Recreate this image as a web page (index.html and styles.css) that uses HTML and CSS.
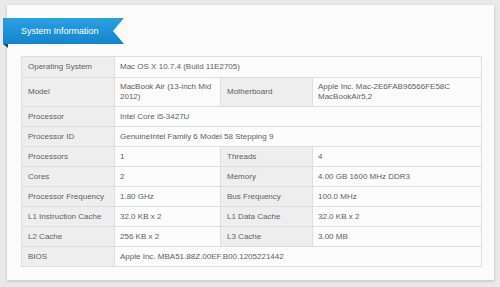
FILE: index.html
```html
<!DOCTYPE html>
<html>
<head>
<meta charset="utf-8">
<link rel="stylesheet" href="styles.css">
</head>
<body>
<div class="card">
  <div class="ribbon-wrap">
    <div class="ribbon">System Information</div>
    <div class="fold"></div>
  </div>
  <table class="info">
    <colgroup>
      <col class="c1"><col class="c2"><col class="c3"><col class="c4">
    </colgroup>
    <tr class="r-first"><th>Operating System</th><td colspan="3">Mac OS X 10.7.4 (Build 11E2705)</td></tr>
    <tr class="r-tall"><th>Model</th><td>MacBook Air (13-inch Mid 2012)</td><th>Motherboard</th><td>Apple Inc. Mac-2E6FAB96566FE58C MacBookAir5,2</td></tr>
    <tr><th>Processor</th><td colspan="3">Intel Core i5-3427U</td></tr>
    <tr><th>Processor ID</th><td colspan="3">GenuineIntel Family 6 Model 58 Stepping 9</td></tr>
    <tr><th>Processors</th><td>1</td><th>Threads</th><td>4</td></tr>
    <tr><th>Cores</th><td>2</td><th>Memory</th><td>4.00 GB 1600 MHz DDR3</td></tr>
    <tr><th>Processor Frequency</th><td>1.80 GHz</td><th>Bus Frequency</th><td>100.0 MHz</td></tr>
    <tr><th>L1 Instruction Cache</th><td>32.0 KB x 2</td><th>L1 Data Cache</th><td>32.0 KB x 2</td></tr>
    <tr><th>L2 Cache</th><td>256 KB x 2</td><th>L3 Cache</th><td>3.00 MB</td></tr>
    <tr><th>BIOS</th><td colspan="3">Apple Inc. MBA51.88Z.00EF.B00.1205221442</td></tr>
  </table>
</div>
</body>
</html>
```
FILE: styles.css
```css
html, body {
  margin: 0;
  padding: 0;
}
body {
  background: #e9e9e9;
  width: 500px;
  height: 287px;
  overflow: hidden;
  font-family: "Liberation Sans", Arial, sans-serif;
}
.card {
  margin: 5px 6px 0 7px;
  height: 275px;
  box-sizing: border-box;
  background: #fbfbfb;
  box-shadow: 0 1px 3px rgba(0,0,0,0.18);
  padding: 13px 13px 13px 14px;
}
.ribbon-wrap {
  margin-left: -18px;
  width: 121px;
  height: 30px;
  display: flex;
  flex-direction: column;
}
.ribbon {
  height: 26px;
  box-sizing: border-box;
  padding-left: 18px;
  line-height: 26px;
  font-size: 9px;
  color: #fff;
  background: linear-gradient(#2aa0e2, #1584cf);
  clip-path: polygon(0 0, 100% 0, calc(100% - 11px) 50%, 100% 100%, 0 100%);
}
.fold {
  width: 0;
  height: 0;
  border-top: 4px solid #0f4f7e;
  border-left: 5px solid transparent;
}
.info {
  margin-top: 8px;
  border-collapse: collapse;
  width: 460px;
  table-layout: fixed;
  font-size: 8px;
  color: #5e5e5e;
}
.c1 { width: 93px; }
.c2 { width: 106px; }
.c3 { width: 92px; }
.c4 { width: 169px; }
.info th, .info td {
  border: 1px solid #dedede;
  height: 20px;
  padding: 0 6px;
  text-align: left;
  font-weight: normal;
  line-height: 10px;
  box-sizing: border-box;
  vertical-align: middle;
}
.info th {
  background: #eeeeee;
}
.info td {
  background: #fcfcfc;
  padding-left: 5px;
}
.r-first th, .r-first td { height: 21px; }
.r-tall th, .r-tall td { height: 29px; }
```
